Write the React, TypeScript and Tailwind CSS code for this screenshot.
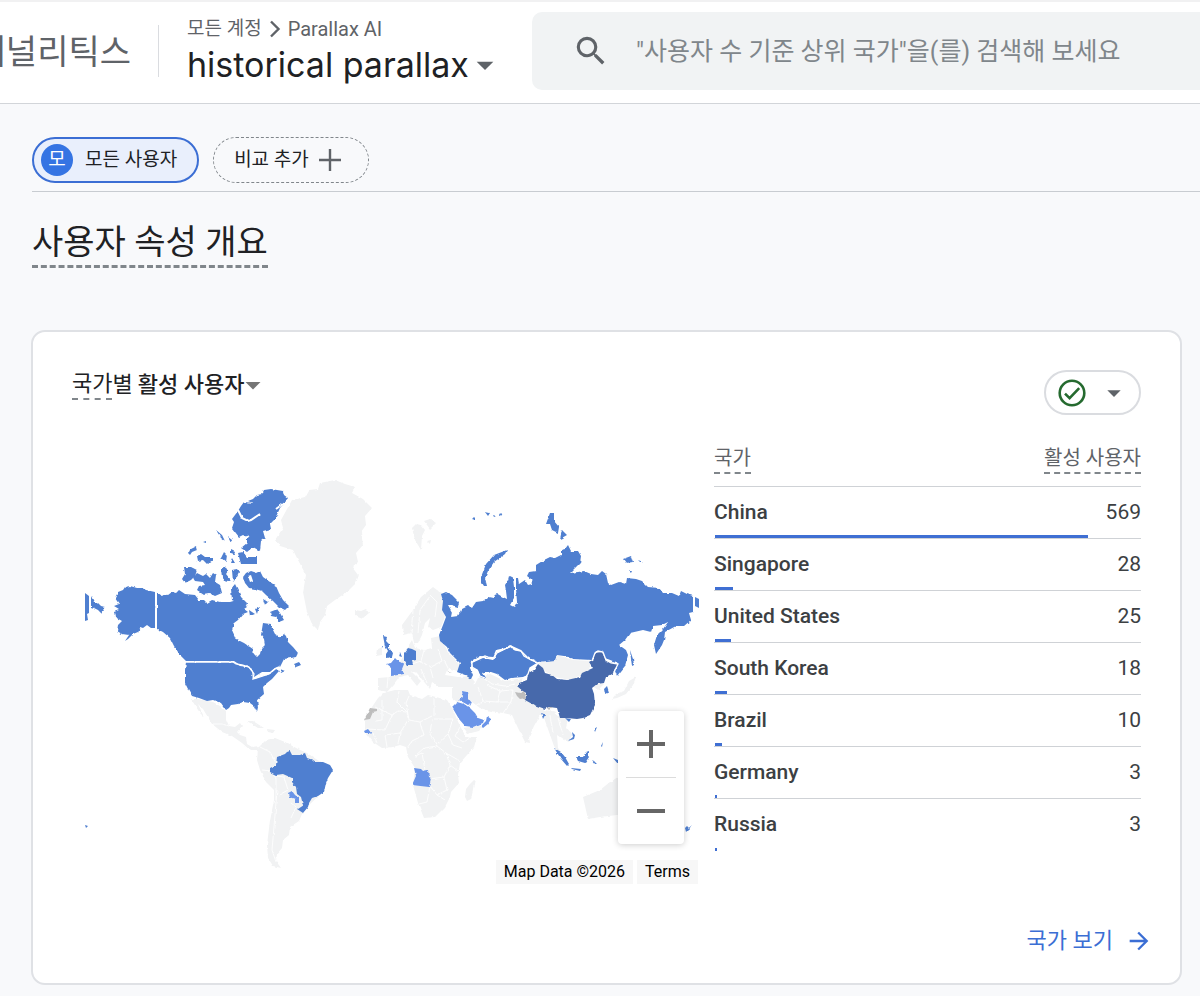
import { MdArrowDropDown, MdArrowForward, MdSearch } from "react-icons/md";

const FONT = "font-[Roboto,'Noto_Sans_CJK_KR',sans-serif]";

type Row = { country: string; users: number };

const rows: Row[] = [
  { country: "China", users: 569 },
  { country: "Singapore", users: 28 },
  { country: "United States", users: 25 },
  { country: "South Korea", users: 18 },
  { country: "Brazil", users: 10 },
  { country: "Germany", users: 3 },
  { country: "Russia", users: 3 },
];

const AXIS_MAX = 652;

const landShapes: string[] = [
  // Greenland, Iceland, Svalbard
  "M335 480 345 484 355 487 352 493 363 499 372 508 365 516 366 525 361 532 363 545 356 553 358 562 352 567 358 575 354 585 347 592 335 600 327 606 325 615 320 622 318 630 312 624 307 612 303 592 306 575 298 560 293 550 280 546 275 540 283 528 281 520 292 500 305 497 309 490 318 489 320 483Z",
  "M355 610 361 611 366 609 369 613 363 618 355 615Z",
  "M412 528 416 524 421 525 425 530 422 536 421 550 415 540ZM424 521 430 519 436 523 430 529ZM427 541 431 540 430 544Z",
  // Central America and Caribbean
  "M191 699 198 699 213 702 220 706 226 711 226 719 229 726 235 727 240 723 242 726 237 732 240 735 246 737 247 744 252 747 259 746 258 750 250 750 242 743 232 736 222 732 212 724 203 709 198 704 204 717 200 713Z",
  "M247 721 253 721 264 728 258 728ZM267 729 275 730 273 733 268 732Z",
  // South America
  "M258 748 266 740 275 738 285 742 298 749 307 753 325 765 325 790 309 805 302 814 299 821 290 827 289 835 283 840 282 848 277 854 276 861 281 868 273 866 268 858 267 845 270 820 274 800 274 790 266 782 260 770 257 760Z",
  // Africa and Madagascar
  "M383 693 395 690 408 690 410 695 422 699 428 695 436 697 447 700 452 708 460 726 466 737 477 737 474 747 460 763 458 775 459 783 451 792 450 797 445 807 435 817 424 818 418 803 413 785 415 768 408 757 406 747 400 745 393 747 382 748 373 742 365 732 365 718 372 707 378 698Z",
  "M475 779 470 784 466 789 465 797 467 801 471 799Z",
  // Scandinavia and Finland
  "M433 587 437 590 442 593 445 617 441 627 433 630 428 627 430 618 425 623 422 635 418 643 414 643 412 633 403 635 402 625 413 610 421 597Z",
  // Continental Europe, Turkey
  "M403 657 407 648 412 640 415 648 424 650 432 648 431 638 440 636 448 652 460 665 457 671 448 668 445 675 458 677 470 676 475 682 470 688 452 687 440 687 432 682 430 689 425 683 417 673 411 671 421 681 417 686 408 675 399 677 394 684 387 692 378 690 378 678 390 677Z",
  "M377 649 382 647 382 655 376 656Z",
  // Western and Central Asia, India
  "M452 687 475 684 478 678 490 674 505 681 523 678 518 686 526 700 545 710 557 712 549 717 540 715 534 726 529 737 530 743 525 742 518 728 512 715 503 713 490 711 480 708 472 702 465 700 457 702 452 698Z",
  "M463 728 484 725 479 731 467 734Z",
  // South-East Asia
  "M543 715 550 710 558 716 568 719 566 727 572 734 569 742 564 740 557 735 558 748 565 757 561 758 554 746 549 732Z",
  // Mongolia, Korea, Japan
  "M538 663 548 660 555 660 557 655 573 660 592 661 588 672 570 680 555 677 543 670Z",
  "M591 685 601 681 604 684 598 690Z",
  "M612 699 616 694 624 691 629 681 636 677 633 685 626 694 617 698Z",
  // Australia
  "M583 797 600 790 610 782 618 777 640 790 650 815 617 815 600 817 588 819Z",
];

const borderLines =
  "M375 707 392 715 398 711 406 712M399 691 397 702 407 712 408 718M409 696 406 703 409 720 420 722 432 716M434 698 434 716M434 719 453 719M382 700 382 720 376 721M392 715 385 730 366 729M408 720 400 733 385 735M420 722 424 735 412 741 407 748M432 719 430 734 437 746 424 748 415 756M453 719 448 734 453 745 462 748M448 734 437 744M400 733 398 744M385 735 387 747M437 746 446 753 450 765 444 777 429 779M446 753 460 761M415 756 422 753 425 770M450 765 458 771M444 777 447 790 437 795 430 786 413 785M430 786 427 802 419 804M437 795 445 800M373 733 377 743M460 727 455 736 463 742 470 737M478 687 483 701 475 706M487 685 500 691 497 702 483 701M500 691 513 690 511 702 503 713M497 702 511 702M482 676 492 684 505 686 515 684M413 610 411 633M430 596 420 610 418 633M430 595 437 602 435 617M424 650 421 661 430 667 442 661 438 649M430 667 433 678M421 661 412 664M421 669 427 683M444 660 448 668M388 677 387 688M550 715 553 733M558 718 563 735M260 747 270 752 276 763M262 770 272 771 276 778 276 800M277 790 275 815 272 850 276 862M276 776 284 777 288 790 279 795M291 803 296 807 291 818M213 724 222 724 229 726";

const activeShapes: string[] = [
  // Alaska
  "M118 592 123 590 125 587 130 586 137 588 142 588 146 590 155 592 155 628 151 628 147 625 143 628 140 627 138 632 133 634 128 639 125 641 129 635 122 634 117 631 118 625 122 621 115 617 114 611 119 609 114 606 119 604 115 598Z",
  "M91 596 94 602 97 602 101 606 105 607 101 613 98 610 94 608 91 607Z",
  // Canadian mainland
  "M157 592 162 596 165 594 168 595 172 592 176 593 179 590 185 594 195 595 199 600 204 600 207 603 212 600 220 602 230 602 237 600 240 599 243 603 247 607 244 609 248 612 243 614 238 620 234 623 232 630 236 639 244 643 253 649 254 654 257 657 260 654 261 649 265 645 264 639 261 635 263 623 270 624 275 634 280 637 285 633 288 642 293 647 298 653 296 657 291 658 284 659 280 667 276 667 270 672 262 672 254 677 252 669 247 665 240 665 234 661 186 661 180 655 174 646 170 638 163 632 157 629Z",
  "M294 664 299 662 301 665 296 667ZM280 669 285 671 281 673Z",
  // Contiguous United States
  "M186 662 233 662 240 666 248 667 252 671 253 679 263 676 270 674 276 669 279 671 272 679 267 683 263 687 264 694 257 700 258 707 257 712 254 706 250 703 243 702 238 704 231 705 229 708 226 710 221 703 213 700 207 701 199 698 192 696 188 689 185 683 185 670Z",
  // Ellesmere and the northern islands
  "M253 503 248 501 253 499 257 495 262 494 264 490 271 489 283 491 284 495 288 498 285 502 280 508 275 519 270 524 271 529 263 531 265 538 261 541 260 551 253 547 247 552 241 548 247 543 247 537 243 535 239 537 232 528 234 522 232 519 238 511 241 506 244 502Z",
  "M238 553 243 552 247 557 257 557 257 564 241 564ZM216 530 222 535 225 541 221 538ZM228 536 232 539 231 542ZM188 553 190 549 196 546 197 550 192 552 190 555ZM197 556 201 554 205 557 213 557 213 560 207 564 203 560 198 561ZM221 558 224 552 227 555 226 562ZM231 549 235 551 234 554 231 553ZM232 558 235 563 230 563ZM203 542 206 541 206 543Z",
  // Victoria, Banks, Baffin and neighbours
  "M184 567 191 567 197 570 195 576 191 580 185 583 182 579 185 574ZM193 578 197 573 203 576 206 574 210 578 213 573 216 575 215 582 220 585 222 593 215 596 209 593 203 594 197 590 199 586 205 585 203 582 195 581ZM221 569 225 566 228 571 226 574 230 579 226 582 222 577ZM232 570 237 569 239 572 236 578 233 582ZM231 589 235 584 238 590 241 597 247 603 246 606 241 604 236 602 232 600Z",
  "M243 577 246 573 250 571 256 573 260 571 263 577 270 582 276 586 279 593 283 600 289 606 285 610 279 607 273 601 266 595 262 591 255 589 249 588 245 583ZM248 576 250 582 253 581 251 575ZM249 610 255 614 250 616ZM263 599 268 602 265 605ZM270 612 275 610 277 609 280 613 284 620 279 622 276 617 271 616ZM257 614 259 607 255 609Z",
  // Brazil
  "M277 757 285 754 287 752 290 751 292 755 300 755 305 753 307 758 313 760 316 762 323 762 330 765 333 770 328 778 326 783 324 792 318 796 312 798 309 803 308 807 303 813 297 809 303 805 301 797 297 794 296 787 292 782 292 778 283 774 276 775 270 772 270 768 276 765Z",
  // United Kingdom and Germany
  "M383 636 387 637 386 641 389 644 389 648 393 653 392 657 386 658 386 654 388 651 385 646ZM381 646 383 646 382 648ZM404 653 408 648 412 649 416 651 416 660 412 661 413 665 407 665 404 661ZM400 652 402 657 399 656Z",
  // Russia
  "M441 594 446 592 452 595 459 602 458 607 451 605 448 605 452 612 451 617 458 616 460 612 462 608 468 605 472 608 476 602 483 601 488 597 493 598 496 593 501 596 507 599 506 591 505 585 508 580 509 576 513 578 514 587 514 598 510 605 514 607 517 602 516 589 516 578 518 578 519 584 522 582 525 580 528 585 532 584 531 579 527 576 529 572 536 571 536 565 544 560 550 557 555 558 561 555 561 550 565 549 568 545 571 551 578 551 581 556 580 563 570 573 578 572 584 571 591 574 598 575 602 571 606 574 608 583 611 585 619 582 626 584 627 578 636 579 642 581 648 587 659 588 663 593 672 593 679 596 681 591 687 594 693 596 693 612 689 613 691 620 684 626 676 626 665 632 664 640 662 645 656 654 654 645 657 635 663 629 668 622 662 625 653 626 651 632 643 630 630 633 625 640 619 645 626 650 628 655 625 666 617 676 615 671 618 663 605 658 602 651 596 651 592 660 573 659 564 656 557 655 555 660 538 662 528 657 521 650 510 645 505 648 496 650 493 657 480 656 471 661 470 668 473 675 471 679 465 675 457 672 460 663 450 653 447 647 440 641 439 635 443 625 446 617 442 610 443 601Z",
  "M481 583 481 577 486 564 494 555 507 550 505 554 494 562 488 571 485 578 487 586 483 586ZM546 524 550 513 554 513 554 521 559 527 558 533 552 530 550 524ZM562 530 567 535 560 539ZM623 559 631 556 633 562 626 563ZM638 560 643 562 640 562ZM472 519 475 516 475 520ZM485 512 490 513 488 516ZM493 515 496 516 494 517ZM499 514 502 513 500 516ZM629 571 632 571 631 573ZM630 650 633 659 634 665 632 666 631 659Z",
  // Kazakhstan
  "M472 663 483 658 493 660 497 653 510 647 514 650 520 651 527 658 537 663 530 668 529 674 523 677 511 678 505 680 497 674 488 671 482 673 485 678 480 677 478 670 473 668Z",
  // South Korea, Indonesia, Philippines, New Zealand
  "M604 689 607 686 609 692 605 694ZM554 748 561 752 565 757 569 764 567 766 561 759ZM571 768 581 769 580 771 572 769ZM576 757 583 757 586 752 589 751 589 757 585 763 578 761ZM592 760 594 761 597 764 595 764ZM613 758 618 760 618 764ZM594 729 597 727 595 732ZM601 746 603 742 602 747ZM568 741 573 737 572 732 575 735 574 739ZM565 718 571 719 569 722ZM687 826 689 828 691 825 690 828 686 832 685 828ZM85 825 88 826 86 828ZM541 712 545 715 543 719Z",
];

const lighterShapes: string[] = [
  // France
  "M386 664 391 663 395 658 398 661 404 664 402 669 404 674 398 675 391 676 391 668Z",
  // Paraguay, Senegal, Angola
  "M288 793 292 791 295 795 299 798 299 803 295 803 295 799 289 797Z",
  "M364 731 368 729 372 734 369 733 365 733Z",
  "M414 768 421 769 423 771 428 770 429 777 431 778 429 787 412 785 416 776Z",
  // Iraq, Saudi Arabia, Oman
  "M462 691 467 692 468 698 472 703 468 705 459 700 463 697Z",
  "M452 707 457 702 464 704 470 708 475 713 478 718 484 720 483 723 473 727 465 726 459 719Z",
  "M487 716 491 719 488 724 483 728 481 726 486 721Z",
];

function WorldMap() {
  return (
    <svg viewBox="84 440 616 448" className="block w-full" role="img" aria-label="국가별 활성 사용자 지도">
      <defs>
        {/* Roughens the simplified outlines into natural coastlines. */}
        <filter id="coast" x="84" y="440" width="616" height="448" filterUnits="userSpaceOnUse">
          <feTurbulence type="fractalNoise" baseFrequency="0.22" numOctaves="2" seed="4" result="noise" />
          <feDisplacementMap in="SourceGraphic" in2="noise" scale="4" xChannelSelector="R" yChannelSelector="G" colorInterpolationFilters="sRGB" />
        </filter>
      </defs>
      <g filter="url(#coast)" transform="translate(1 1)">
        <g fill="#f1f2f3">
          {landShapes.map((d) => (
            <path key={d} d={d} />
          ))}
        </g>
        <path d={borderLines} fill="none" stroke="#fff" strokeWidth="0.8" />
        <g fill="#4f7fd0">
          {activeShapes.map((d) => (
            <path key={d} d={d} fillRule="evenodd" />
          ))}
        </g>
        <g fill="#6a94e8">
          {lighterShapes.map((d) => (
            <path key={d} d={d} />
          ))}
        </g>
        <path
          fill="#4769ab"
          d="M538 664 543 668 545 673 552 675 557 679 567 680 580 677 582 673 593 668 589 662 594 659 594 653 602 652 606 661 617 664 613 673 606 677 604 683 597 684 592 688 594 694 595 705 590 715 583 718 577 719 567 718 560 718 557 708 549 707 545 709 534 705 525 700 526 694 517 686 519 683 527 680 528 673 534 670Z"
        />
        <path
          fill="#bdbdbd"
          d="M370 708 377 709 377 711 373 712 370 719 364 720ZM515 692 520 693 524 691 526 698 520 699 517 696ZM447 671 452 672 449 673ZM547 708 554 706 549 710Z"
        />
        <path
          d="M238 510 242 518 248 521 251 520 260 514M242 543 249 535M276 509 288 500"
          fill="none"
          stroke="#fff"
          strokeWidth="2"
        />
      </g>
      <path fill="#4f7fd0" d="M85 593 89 596 89 613 87 614 88 620 85 621ZM695 597 699 599 699 608 695 606Z" />
      <g fill="none" stroke="#fff" strokeWidth="1.3">
        <path strokeWidth="1.6" d="M156 588V630" />
        <path d="M184 662H233L236 664 242 665 249 667 252 671 254 674 253 679 263 676 269 674 276 668 279 667 279 671" />
        <path d="M485 678 480 676 477 670 472 667 472 662 480 658 485 656 493 659 497 653 505 649 511 646 515 650 521 651 524 656 531 660 538 663 530 668 528 674 525 678" />
        <path d="M592 661 595 653 598 651 603 652 606 660 611 663 618 664 614 672" />
      </g>
    </svg>
  );
}

function Header() {
  return (
    <header className="flex h-[104px] border-t-2 border-b border-t-[#f1f1f2] border-b-[#d2d5d9] bg-white">
      <div className="flex h-[100px] w-[131px] shrink-0 items-center justify-end overflow-hidden text-[34px] whitespace-nowrap text-[#5f6368]">
        애널리틱스
      </div>
      <div className="mt-[23px] ml-[27px] h-[52px] w-px shrink-0 bg-[#dadce0]" />
      <div className="ml-7 w-[345px] shrink-0 pt-[15px]">
        <nav className="flex items-center leading-6 text-[#5f6368]">
          <a href="#accounts" className="text-[19px]">
            모든 계정
          </a>
          <svg viewBox="0 0 12 18" className="mx-[7px] h-[18px] w-3" fill="none" stroke="#5f6368" strokeWidth="2.4">
            <path d="M2 1.5 9.5 9 2 16.5" />
          </svg>
          <a href="#parallax" className="text-[20px]">
            Parallax AI
          </a>
        </nav>
        <button className="flex items-center font-[Inter,sans-serif] text-[34px] leading-[48px] whitespace-nowrap text-[#202124]">
          historical parallax
          <MdArrowDropDown className="-ml-1 size-10 text-[#5f6368]" />
        </button>
      </div>
      <div className="mt-[10px] flex h-[78px] min-w-0 flex-1 items-center rounded-l-[10px] bg-[#f1f3f4] pl-10">
        <MdSearch className="size-[38px] shrink-0 text-[#5f6368]" />
        <input
          type="search"
          aria-label="검색"
          placeholder={'"사용자 수 기준 상위 국가"을(를) 검색해 보세요'}
          className="ml-[26px] min-w-0 flex-1 bg-transparent pt-px text-[25px] outline-none placeholder:text-[#80868b]"
        />
      </div>
    </header>
  );
}

function CountryTable() {
  return (
    <table className="w-full border-collapse self-start text-[#3c4043]">
      <thead>
        <tr className="h-[46px] border-b border-[#cfd2d6] text-[20px] leading-7 text-[#5f6368]">
          <th className="pb-2 text-left align-middle font-normal">
            <span className="inline-block border-b-2 border-dashed border-[#80868b]">국가</span>
          </th>
          <th className="pb-2 text-right align-middle font-normal">
            <span className="inline-block border-b-2 border-dashed border-[#80868b]">활성 사용자</span>
          </th>
        </tr>
      </thead>
      <tbody>
        {rows.map((row) => (
          <tr
            key={row.country}
            className="relative h-[52px] border-b border-[#cfd2d6] text-[21px] leading-7 last:border-b-0"
          >
            <th scope="row" className="text-left font-medium">
              {row.country}
              <span
                className="absolute -bottom-px left-px h-[3px] bg-[#3f6fd3]"
                style={{ width: `${(row.users / AXIS_MAX) * 100}%` }}
              />
            </th>
            <td className="text-right">{row.users}</td>
          </tr>
        ))}
      </tbody>
    </table>
  );
}

export default function App() {
  return (
    <div className={`${FONT} min-h-screen overflow-x-hidden bg-[#f8f9fb] pb-3 text-[#202124]`}>
      <Header />
      <main>
        <div className="ml-8 flex items-start gap-[14px] border-b border-[#c8ccd1] pt-[33px] pb-2">
          <button className="flex h-[46px] items-center rounded-full border-2 border-[#3b6ed4] bg-[#e9effc] pr-5 pl-[7px] text-[19px]">
            <span className="mr-3 flex size-8 items-center justify-center rounded-full bg-[#3574e3] text-white">모</span>
            모든 사용자
          </button>
          <button className="flex h-[46px] items-center gap-[10px] rounded-full border border-dashed border-[#80868b] pr-[27px] pl-5 text-[19px]">
            비교 추가
            <svg viewBox="0 0 22 22" className="size-[22px]" stroke="#5f6368" strokeWidth="2.4">
              <path d="M11 0V22M0 11H22" />
            </svg>
          </button>
        </div>

        <h1 className="mt-[23px] ml-8 w-fit border-b-3 border-dashed border-[#80868b] pt-1 text-[34px] leading-[46px]">
          사용자 속성 개요
        </h1>

        <section className="mt-[62px] mr-[18px] ml-[31px] rounded-[14px] border-2 border-[#dfe1e5] bg-white px-[39px] pt-[38px] pb-[26px]">
          <div className="flex items-start justify-between">
            <button className="flex items-center text-[22px] leading-[30px]">
              <span className="border-b-2 border-dashed border-[#80868b] leading-7">국가</span>별
              <span className="ml-[5px] font-medium">활성 사용자</span>
              <MdArrowDropDown className="-my-1 -ml-[9px] size-9 text-[#757575]" />
            </button>
            <button
              aria-label="데이터 품질"
              className="flex h-[45px] w-[97px] items-center rounded-full border-2 border-[#dadce0] pl-3"
            >
              <svg viewBox="0 0 28 28" className="size-7" fill="none" stroke="#256a2f" strokeWidth="2.6">
                <circle cx="14" cy="14" r="12.3" />
                <path d="M7 14.6 11.6 19.2 21.2 9.2" />
              </svg>
              <MdArrowDropDown className="ml-3 size-8 text-[#5f6368]" />
            </button>
          </div>

          <div className="mt-[25px] grid grid-cols-[616fr_427fr] gap-[14px] pl-3">
            <div className="relative">
              <WorldMap />
              <div className="absolute right-4 bottom-11 flex w-[66px] flex-col items-center rounded-sm bg-white shadow-[0_1px_6px_rgba(0,0,0,0.2)]">
                <button aria-label="확대" className="flex h-[66px] items-center justify-center">
                  <svg viewBox="0 0 28 28" className="size-7" stroke="#666" strokeWidth="4">
                    <path d="M14 0V28M0 14H28" />
                  </svg>
                </button>
                <div className="h-px w-[50px] bg-[#dcdcdc]" />
                <button aria-label="축소" className="flex h-[66px] items-center justify-center">
                  <svg viewBox="0 0 28 28" className="size-7" stroke="#666" strokeWidth="4">
                    <path d="M0 14H28" />
                  </svg>
                </button>
              </div>
              <div className="absolute right-[2px] bottom-1 flex gap-1 text-[16px] leading-6 text-black">
                <span className="bg-[#f7f7f7] px-2">Map Data ©2026</span>
                <a href="#terms" className="bg-[#f7f7f7] px-2">
                  Terms
                </a>
              </div>
            </div>
            <CountryTable />
          </div>

          <a
            href="#countries"
            className="mt-[37px] -mr-3 ml-auto flex w-fit items-center gap-3 text-[22px] leading-8 text-[#3b6ed4]"
          >
            국가 보기
            <MdArrowForward className="size-7" />
          </a>
        </section>
      </main>
    </div>
  );
}
